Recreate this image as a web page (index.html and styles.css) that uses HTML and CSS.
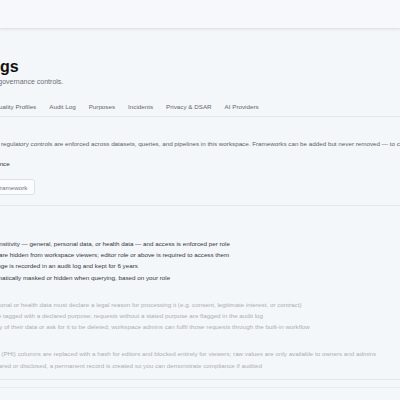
FILE: index.html
```html
<!DOCTYPE html>
<html lang="en">
<head>
    <meta charset="UTF-8">
    <meta name="viewport" content="width=device-width, initial-scale=1.0">
    <title>Settings</title>
    <link rel="stylesheet" href="styles.css">
</head>
<body>
    <header class="topbar"></header>
    <main class="page">
        <h1 class="page-title">Settings</h1>
        <p class="page-subtitle">Manage data governance controls.</p>

        <nav class="tabs">
            <a class="tab active">Controls</a>
            <a class="tab">Quality Profiles</a>
            <a class="tab">Audit Log</a>
            <a class="tab">Purposes</a>
            <a class="tab">Incidents</a>
            <a class="tab">Privacy &amp; DSAR</a>
            <a class="tab">AI Providers</a>
        </nav>

        <section class="section">
            <p class="section-desc">Configure when regulatory controls are enforced across datasets, queries, and pipelines in this workspace. Frameworks can be added but never removed — to change one, contact an owner.</p>
            <p class="section-label">Default governance</p>
            <button class="btn-outline">Add another framework</button>
        </section>

        <section class="frameworks">
            <h2 class="frameworks-title">Rules</h2>
            <ul class="rules">
                <li>Classified by sensitivity — general, personal data, or health data — and access is enforced per role</li>
                <li>Sensitive fields are hidden from workspace viewers; editor role or above is required to access them</li>
                <li>Every data change is recorded in an audit log and kept for 6 years</li>
                <li>Fields are automatically masked or hidden when querying, based on your role</li>
            </ul>
            <ul class="rules disabled">
                <li>Queries on personal or health data must declare a legal reason for processing it (e.g. consent, legitimate interest, or contract)</li>
                <li>Queries must be tagged with a declared purpose; requests without a stated purpose are flagged in the audit log</li>
                <li>Users get a copy of their data or ask for it to be deleted; workspace admins can fulfil those requests through the built-in workflow</li>
            </ul>
            <ul class="rules disabled">
                <li>Medical records (PHI) columns are replaced with a hash for editors and blocked entirely for viewers; raw values are only available to owners and admins</li>
                <li>When PHI is shared or disclosed, a permanent record is created so you can demonstrate compliance if audited</li>
            </ul>
        </section>

        <section class="section-next"></section>
    </main>
</body>
</html>
```

FILE: styles.css
```css
html {
    zoom: 0.5;
    overflow: hidden;
}
body {
    font-family: "Liberation Sans", Arial, sans-serif;
    margin: 0;
    background-color: #f4f7fa;
    color: #333;
    overflow: hidden;
}
.topbar {
    height: 55px;
    background-color: #f6f8fb;
    border-bottom: 1px solid #dfe3e8;
    box-shadow: 0 2px 6px rgba(0,0,0,0.06);
}
.page {
    width: 1300px;
    margin-left: -89px;
    padding-top: 57px;
}
.page-title {
    margin: 0;
    font-size: 32px;
    line-height: 38px;
    font-weight: bold;
    color: #111;
}
.page-subtitle {
    margin: 1px 0 0;
    font-size: 14px;
    line-height: 20px;
    color: #6b6f75;
}
.tabs {
    display: flex;
    gap: 26px;
    margin-top: 22px;
    border-bottom: 1px solid #e3e7ec;
}
.tab {
    padding: 9px 0;
    font-size: 12.5px;
    line-height: 18px;
    color: #62666b;
}
.tab.active {
    font-weight: bold;
    color: #222;
}
.section {
    padding: 45px 0 20px;
}
.section-desc {
    margin: 0;
    font-size: 12.5px;
    line-height: 20px;
    color: #5d6166;
}
.section-label {
    margin: 20px 0 0;
    font-size: 12.5px;
    line-height: 20px;
    color: #333;
}
.btn-outline {
    display: block;
    box-sizing: border-box;
    margin-top: 20px;
    height: 32px;
    padding: 0 14px 0 12px;
    font-family: inherit;
    font-size: 12.5px;
    color: #74787d;
    background-color: #fbfcfd;
    border: 1px solid #dde1e6;
    border-radius: 6px;
}
.frameworks {
    border-top: 1px solid #e3e7ec;
    border-bottom: 1px solid #e3e7ec;
    padding: 21px 0 18px;
}
.frameworks-title {
    margin: 0 0 24px;
    font-size: 13px;
    line-height: 20px;
    color: #222;
}
.rules {
    list-style: none;
    margin: 0 0 35px;
    padding: 0;
    display: grid;
    gap: 3.5px;
    font-size: 12.5px;
    line-height: 19.2px;
    color: #35383c;
}
.rules:last-child {
    margin-bottom: 0;
}
.rules.disabled {
    color: #abafb4;
}
.section-next {
    margin-top: 13px;
    border-top: 1px solid #e8ebef;
    height: 80px;
}
```
